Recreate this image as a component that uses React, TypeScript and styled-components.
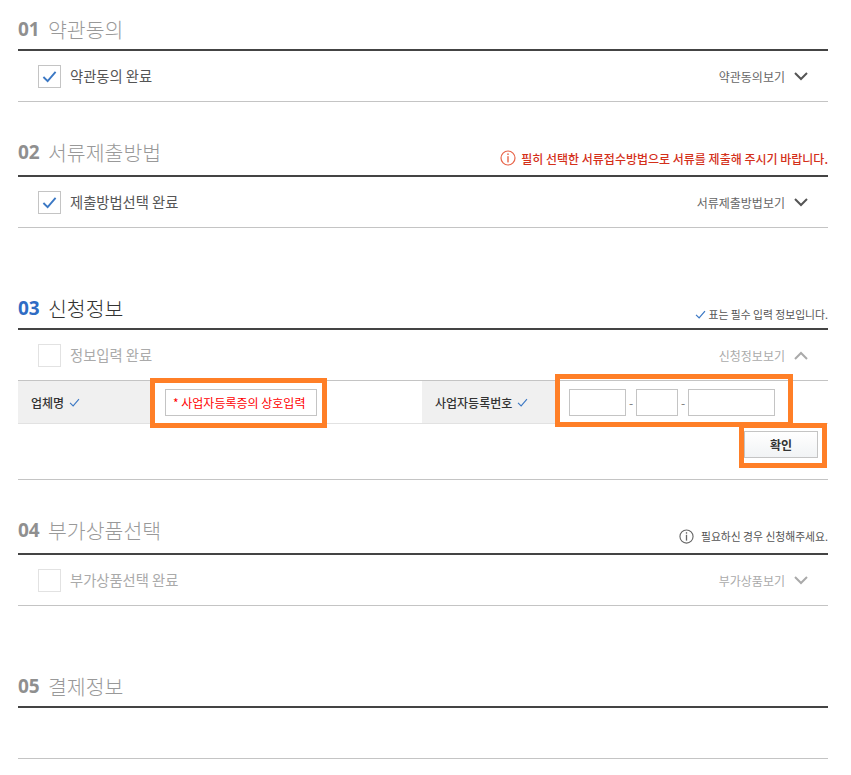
import * as React from "react";
import styled, { createGlobalStyle } from "styled-components";

const GlobalStyle = createGlobalStyle`
  html, body {
    margin: 0;
    padding: 0;
    background: #fff;
    font-family: "Noto Sans CJK KR", "Noto Sans", sans-serif;
  }
`;

const Page = styled.main`
  width: 810px;
  margin-left: 18px;
  padding-top: 5px;
`;

const Section = styled.section<{ $gap: number }>`
  margin-bottom: ${(p) => p.$gap}px;
`;

const Heading = styled.header`
  height: 44px;
  border-bottom: 2px solid #444;
  display: flex;
  justify-content: space-between;
  box-sizing: content-box;
`;

const Title = styled.h2<{ $active?: boolean; $raised?: boolean }>`
  margin: 0;
  display: flex;
  align-items: center;
  height: ${(p) => (p.$raised ? "42px" : "48px")};
  font-size: 20.5px;
  font-weight: 300;
  color: ${(p) => (p.$active ? "#333" : "#999")};
`;

const Num = styled.span<{ $active?: boolean }>`
  width: 30px;
  font-family: "Open Sans", sans-serif;
  font-size: 19px;
  font-weight: 700;
  color: ${(p) => (p.$active ? "#2f6cc4" : "#8f8f8f")};
`;

const Note = styled.p<{ $tone: "red" | "dark"; $raise: number; $spacing: number }>`
  margin: 0 0 ${(p) => p.$raise}px;
  align-self: flex-end;
  height: 24px;
  display: flex;
  align-items: center;
  gap: ${(p) => p.$spacing}px;
  font-size: ${(p) => (p.$tone === "red" ? "12px" : "10.8px")};
  font-weight: ${(p) => (p.$tone === "red" ? 500 : 400)};
  color: ${(p) => (p.$tone === "red" ? "#d4301a" : "#555")};
`;

const StatusRow = styled.div<{ $open?: boolean }>`
  box-sizing: border-box;
  height: ${(p) => (p.$open ? "50px" : "51px")};
  padding: 0 20px;
  display: flex;
  align-items: center;
  justify-content: space-between;
  border-bottom: ${(p) => (p.$open ? "none" : "1px solid #c4c4c4")};
`;

const Left = styled.div`
  display: flex;
  align-items: center;
  gap: 9px;
`;

const Check = styled.span<{ $done?: boolean }>`
  box-sizing: border-box;
  width: 23px;
  height: 23px;
  display: flex;
  align-items: center;
  justify-content: center;
  background: #fff;
  border: 1px solid ${(p) => (p.$done ? "#c4c4c4" : "#e2e2e2")};
`;

const StatusText = styled.span<{ $done?: boolean }>`
  padding-bottom: 2px;
  font-size: 14.3px;
  color: ${(p) => (p.$done ? "#555" : "#aaa")};
`;

const Toggle = styled.div<{ $done?: boolean }>`
  display: flex;
  align-items: center;
  gap: 9px;
  font-size: 12px;
  color: ${(p) => (p.$done ? "#666" : "#aaa")};
`;

const Panel = styled.div`
  position: relative;
  border-bottom: 1px solid #c4c4c4;
`;

const FormRow = styled.div`
  box-sizing: border-box;
  height: 44px;
  display: grid;
  grid-template-columns: 132px 272px 133px 1fr;
  border-top: 1px solid #c4c4c4;
  border-bottom: 1px solid #e2e2e2;
`;

const Label = styled.div`
  background: #f0f0f0;
  display: flex;
  align-items: center;
  gap: 5px;
  padding-left: 13px;
  font-size: 12px;
  font-weight: 500;
  color: #333;
`;

const Cell = styled.div<{ $pad: number }>`
  display: flex;
  align-items: center;
  padding-left: ${(p) => p.$pad}px;
`;

const Input = styled.input<{ $width: number }>`
  box-sizing: border-box;
  width: ${(p) => p.$width}px;
  height: 27px;
  padding: 0 7px;
  border: 1px solid #c4c4c4;
  border-radius: 0;
  outline: none;
  font-family: inherit;
  font-size: 12px;
  &::placeholder {
    color: #f00;
    opacity: 1;
  }
`;

const Dash = styled.span`
  width: 10px;
  text-align: center;
  font-size: 12px;
  color: #777;
`;

const Actions = styled.div`
  box-sizing: border-box;
  height: 55px;
  padding: 7px 10px 0 0;
  display: flex;
  justify-content: flex-end;
  align-items: flex-start;
`;

const Confirm = styled.button`
  box-sizing: border-box;
  width: 74px;
  height: 27px;
  padding: 0;
  border: 1px solid #c4c4c4;
  background: linear-gradient(#fff, #f1f3f5);
  font-family: inherit;
  font-size: 12px;
  font-weight: 700;
  color: #333;
`;

const Highlight = styled.div<{ $left: number; $top: number; $width: number; $height: number }>`
  position: absolute;
  box-sizing: border-box;
  left: ${(p) => p.$left}px;
  top: ${(p) => p.$top}px;
  width: ${(p) => p.$width}px;
  height: ${(p) => p.$height}px;
  border: 5px solid #ff7f27;
  pointer-events: none;
`;

const EmptyBody = styled.div`
  height: 51px;
  box-sizing: border-box;
  border-bottom: 1px solid #c4c4c4;
`;

const CheckMark = ({ size = 15, width = 2 }: { size?: number; width?: number }) => (
  <svg width={size} height={size} viewBox="0 0 16 16" fill="none">
    <polyline points="1.5,8.5 6,13 14.5,3" stroke="#3b78c4" strokeWidth={width} />
  </svg>
);

const Chevron = ({ up, color }: { up?: boolean; color: string }) => (
  <svg width="14" height="9" viewBox="0 0 14 9" fill="none">
    <polyline points={up ? "1,8 7,2 13,8" : "1,1 7,7 13,1"} stroke={color} strokeWidth="2" />
  </svg>
);

const InfoIcon = ({ color, size }: { color: string; size: number }) => (
  <svg width={size} height={size} viewBox="0 0 16 16" fill="none">
    <circle cx="8" cy="8" r="7" stroke={color} strokeWidth="1.2" />
    <rect x="7.3" y="3.4" width="1.4" height="1.6" fill={color} />
    <rect x="7.3" y="6.2" width="1.4" height="6.2" fill={color} />
  </svg>
);

export default function App() {
  return (
    <Page>
      <GlobalStyle />

      <Section $gap={29}>
        <Heading>
          <Title>
            <Num>01</Num>약관동의
          </Title>
        </Heading>
        <StatusRow>
          <Left>
            <Check $done>
              <CheckMark />
            </Check>
            <StatusText $done>약관동의 완료</StatusText>
          </Left>
          <Toggle $done>
            약관동의보기
            <Chevron color="#555" />
          </Toggle>
        </StatusRow>
      </Section>

      <Section $gap={56}>
        <Heading>
          <Title $raised>
            <Num>02</Num>서류제출방법
          </Title>
          <Note $tone="red" $raise={5} $spacing={5}>
            <InfoIcon color="#e8654a" size={16} />
            필히 선택한 서류접수방법으로 서류를 제출해 주시기 바랍니다.
          </Note>
        </Heading>
        <StatusRow>
          <Left>
            <Check $done>
              <CheckMark />
            </Check>
            <StatusText $done>제출방법선택 완료</StatusText>
          </Left>
          <Toggle $done>
            서류제출방법보기
            <Chevron color="#555" />
          </Toggle>
        </StatusRow>
      </Section>

      <Section $gap={29}>
        <Heading>
          <Title $active>
            <Num $active>03</Num>신청정보
          </Title>
          <Note $tone="dark" $raise={2} $spacing={2}>
            <CheckMark size={11} width={1.8} />
            표는 필수 입력 정보입니다.
          </Note>
        </Heading>
        <StatusRow $open>
          <Left>
            <Check />
            <StatusText>정보입력 완료</StatusText>
          </Left>
          <Toggle>
            신청정보보기
            <Chevron up color="#aaa" />
          </Toggle>
        </StatusRow>
        <Panel>
          <FormRow>
            <Label>
              업체명 <CheckMark size={11} width={1.6} />
            </Label>
            <Cell $pad={15}>
              <Input $width={152} placeholder="* 사업자등록증의 상호입력" />
            </Cell>
            <Label>
              사업자등록번호 <CheckMark size={11} width={1.6} />
            </Label>
            <Cell $pad={14}>
              <Input $width={57} />
              <Dash>-</Dash>
              <Input $width={42} />
              <Dash>-</Dash>
              <Input $width={87} />
            </Cell>
          </FormRow>
          <Actions>
            <Confirm type="button">확인</Confirm>
          </Actions>
          <Highlight $left={132} $top={-2} $width={177} $height={50} />
          <Highlight $left={537} $top={-6} $width={238} $height={53} />
          <Highlight $left={721} $top={43} $width={88} $height={45} />
        </Panel>
      </Section>

      <Section $gap={56}>
        <Heading>
          <Title $raised>
            <Num>04</Num>부가상품선택
          </Title>
          <Note $tone="dark" $raise={5} $spacing={7}>
            <InfoIcon color="#666" size={15} />
            필요하신 경우 신청해주세요.
          </Note>
        </Heading>
        <StatusRow>
          <Left>
            <Check />
            <StatusText>부가상품선택 완료</StatusText>
          </Left>
          <Toggle>
            부가상품보기
            <Chevron color="#aaa" />
          </Toggle>
        </StatusRow>
      </Section>

      <Section $gap={0}>
        <Heading>
          <Title>
            <Num>05</Num>결제정보
          </Title>
        </Heading>
        <EmptyBody />
      </Section>
    </Page>
  );
}
